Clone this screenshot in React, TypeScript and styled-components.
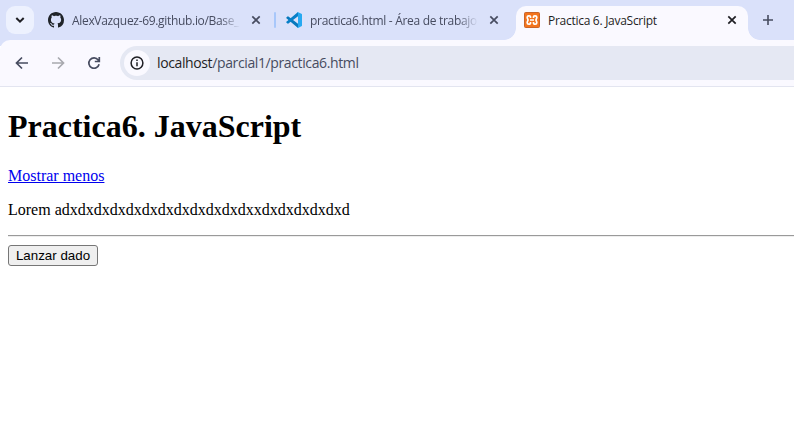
import React from "react";
import styled, { createGlobalStyle } from "styled-components";

const GlobalStyle = createGlobalStyle`
  * { box-sizing: border-box; }
  html, body { margin: 0; height: 100%; background: #fff; overflow: hidden; }
`;

const uiFont = `"Open Sans", "Noto Sans", sans-serif`;

const Browser = styled.div`
  width: 794px;
  height: 441px;
  display: flex;
  flex-direction: column;
  overflow: hidden;
  background: #fff;
`;

const TabStrip = styled.div`
  height: 46px;
  flex: none;
  padding: 6px 0 0 6px;
  margin-bottom: -6px;
  display: flex;
  align-items: flex-start;
  background: #dae1fa;
  font: 12px/28px ${uiFont};
`;

const TabSearch = styled.button`
  width: 28px;
  height: 28px;
  margin-right: 6px;
  padding: 0;
  border: 0;
  border-radius: 9px;
  background: #edf1fe;
  display: flex;
  align-items: center;
  justify-content: center;
`;

const Tab = styled.div<{ $active?: boolean }>`
  width: 232px;
  height: ${(p) => (p.$active ? 34 : 28)}px;
  flex: none;
  margin-left: ${(p) => (p.$active ? 6 : 0)}px;
  padding: 0 8px;
  display: flex;
  align-items: flex-start;
  position: relative;
  color: ${(p) => (p.$active ? "#1f1f24" : "#474c60")};
  background: ${(p) => (p.$active ? "#faf9ff" : "transparent")};
  border-radius: 10px 10px 0 0;

  &::before,
  &::after {
    content: "";
    display: ${(p) => (p.$active ? "block" : "none")};
    position: absolute;
    bottom: 0;
    width: 12px;
    height: 12px;
  }
  &::before {
    left: -12px;
    background: radial-gradient(circle at 0 0, transparent 11.5px, #faf9ff 12.2px);
  }
  &::after {
    right: -12px;
    background: radial-gradient(circle at 100% 0, transparent 11.5px, #faf9ff 12.2px);
  }
`;

const Favicon = styled.span`
  width: 16px;
  height: 28px;
  flex: none;
  margin-right: 8px;
  display: flex;
  align-items: center;
`;

const TabTitle = styled.span<{ $fade?: boolean; $spacing: number }>`
  flex: 1;
  min-width: 0;
  padding-top: 1px;
  overflow: hidden;
  white-space: nowrap;
  letter-spacing: ${(p) => p.$spacing}px;
  mask-image: ${(p) =>
    p.$fade ? "linear-gradient(90deg, #000 calc(100% - 20px), transparent)" : "none"};
`;

const CloseButton = styled.button<{ $active?: boolean }>`
  width: 16px;
  height: 28px;
  margin-left: 8px;
  padding: 0;
  border: 0;
  background: none;
  color: ${(p) => (p.$active ? "#1f1f24" : "#474c60")};
  display: flex;
  align-items: center;
  justify-content: center;
`;

const Separator = styled.span`
  width: 2px;
  height: 16px;
  margin: 6px 2px 0;
  border-radius: 1px;
  background: #a8c7fa;
`;

const NewTab = styled.button`
  width: 28px;
  height: 28px;
  margin-left: 6px;
  padding: 0;
  border: 0;
  background: none;
  color: #474c60;
  display: flex;
  align-items: center;
  justify-content: center;
`;

const Toolbar = styled.div`
  height: 47px;
  flex: none;
  padding: 6px 0 6px 14px;
  display: flex;
  align-items: center;
  position: relative;
  background: #faf9ff;
  border-bottom: 1px solid #e3e5f0;
  border-radius: 10px 0 0 0;
`;

const NavButton = styled.button<{ $disabled?: boolean }>`
  width: 16px;
  height: 16px;
  margin-right: 20px;
  padding: 0;
  border: 0;
  background: none;
  color: ${(p) => (p.$disabled ? "#a8a9af" : "#474c60")};
  display: flex;
`;

const AddressBar = styled.div`
  flex: 1;
  height: 34px;
  margin-left: -2px;
  padding-left: 4px;
  border-radius: 17px 0 0 17px;
  background: #e5e8f3;
  display: flex;
  align-items: center;
  color: #474c60;
  font: 14px/34px ${uiFont};
  letter-spacing: -0.38px;
`;

const SiteInfo = styled.span`
  width: 26px;
  height: 26px;
  margin-right: 7px;
  border-radius: 50%;
  background: #faf9ff;
  display: flex;
  align-items: center;
  justify-content: center;
`;

const Host = styled.span`
  color: #1f1f24;
`;

const Page = styled.main`
  flex: 1;
  width: 820px;
  padding: 0 8px;
  color: #000;
  font: 16px/18px "Liberation Serif", "Times New Roman", serif;
`;

const Heading = styled.h1`
  margin: 21.44px 0;
  font-size: 32px;
  line-height: 37px;
`;

const ToggleLink = styled.a`
  color: #0000ee;
  text-decoration: underline;
`;

const Paragraph = styled.p`
  margin: 16px 0;
`;

const Rule = styled.hr`
  height: 2px;
  margin: 0 0 8px;
  border: 0;
  border-top: 1px solid #9a9a9a;
  border-bottom: 1px solid #eeeeee;
`;

const RollButton = styled.button`
  display: block;
  width: 90px;
  height: 21px;
  padding: 0;
  border: 1px solid #767676;
  border-radius: 3px;
  background: #efefef;
  color: #000;
  font: 13.333px/19px "Liberation Sans", Arial, sans-serif;
`;

const CloseIcon = () => (
  <svg width="10" height="10" viewBox="0 0 10 10" stroke="currentColor" strokeWidth="1.7">
    <path d="M1.3 1.3 8.7 8.7M8.7 1.3 1.3 8.7" />
  </svg>
);

const GithubIcon = () => (
  <svg width="16" height="16" viewBox="0 0 16 16" fill="#202429">
    <path d="M8 0C3.58 0 0 3.58 0 8c0 3.54 2.29 6.53 5.47 7.59.4.07.55-.17.55-.38 0-.19-.01-.82-.01-1.49-2.01.37-2.53-.49-2.69-.94-.09-.23-.48-.94-.82-1.13-.28-.15-.68-.52-.01-.53.63-.01 1.08.58 1.23.82.72 1.21 1.87.87 2.33.66.07-.52.28-.87.51-1.07-1.78-.2-3.64-.89-3.64-3.95 0-.87.31-1.59.82-2.15-.08-.2-.36-1.02.08-2.12 0 0 .67-.21 2.2.82.64-.18 1.32-.27 2-.27s1.36.09 2 .27c1.53-1.04 2.2-.82 2.2-.82.44 1.1.16 1.92.08 2.12.51.56.82 1.27.82 2.15 0 3.07-1.87 3.75-3.65 3.95.29.25.54.73.54 1.48 0 1.07-.01 1.93-.01 2.2 0 .21.15.46.55.38A8.01 8.01 0 0 0 16 8c0-4.42-3.58-8-8-8z" />
  </svg>
);

const CodeIcon = () => (
  <svg width="16" height="16" viewBox="0 0 16 16">
    <path fill="#0879bd" d="M.4 5.4 1.5 4.4a.7.7 0 0 1 .9 0L12 11.8V16L.4 6.3a.6.6 0 0 1 0-.9z" />
    <path fill="#087fc8" d="M.4 10.6 1.5 11.6a.7.7 0 0 0 .9 0L12 4.2V0L.4 9.7a.6.6 0 0 0 0 .9z" />
    <path fill="#27a9f1" d="M11.5 15.9c-.3-.1-.5-.3-.5-.3.4.3 1 0 1-.6V1c0-.6-.6-.9-1-.6l.7-.4 3.7 1.7c.4.2.6.5.6.9v10.8c0 .4-.2.7-.6.9l-3.3 1.6z" />
  </svg>
);

const XamppIcon = () => (
  <svg width="16" height="16" viewBox="0 0 16 16">
    <rect x=".5" y=".5" width="15" height="15" rx="1" fill="#f3741d" stroke="#c9652a" />
    <path
      d="M6.5 6V4.800C6.500 3.500 3.200 3.300 3.200 5.200c0 1.400.8 1.700.8 2.800s-.8 1.400-.8 2.800c0 1.900 3.300 1.700 3.300.4V10M9.500 6V4.800c0-1.300 3.300-1.500 3.300.4 0 1.400-.8 1.700-.8 2.800s.8 1.400.8 2.800c0 1.900-3.300 1.700-3.300.4V10M6 8h4"
      fill="none"
      stroke="#fff"
      strokeWidth="1.700"
      strokeLinejoin="round"
    />
  </svg>
);

const ArrowIcon = ({ forward = false }: { forward?: boolean }) => (
  <svg width="16" height="16" viewBox="0 0 16 16" fill="none" stroke="currentColor" strokeWidth="1.7">
    <path d={forward ? "M2 8h11M8 2.500 13.500 8 8 13.500" : "M14 8H3M8 2.500 2.500 8 8 13.500"} />
  </svg>
);

const ReloadIcon = () => (
  <svg width="16" height="16" viewBox="0 0 16 16" fill="none" stroke="currentColor" strokeWidth="1.7">
    <path d="M13.100 9.300A5.200 5.200 0 1 1 12.200 4.900L13.200 6.100M13.300 2v4.500H8.800" />
  </svg>
);

export default function App() {
  return (
    <>
      <GlobalStyle />
      <Browser>
        <TabStrip>
          <TabSearch aria-label="Buscar pestañas">
            <svg width="10" height="8" viewBox="0 0 10 8" fill="none" stroke="#1f1f24" strokeWidth="2">
              <path d="m1.300 2 3.700 3.700L8.700 2" />
            </svg>
          </TabSearch>
          <Tab>
            <Favicon><GithubIcon /></Favicon>
            <TabTitle $fade $spacing={-0.32}>AlexVazquez-69.github.io/Base_</TabTitle>
            <CloseButton aria-label="Cerrar"><CloseIcon /></CloseButton>
          </Tab>
          <Separator />
          <Tab>
            <Favicon><CodeIcon /></Favicon>
            <TabTitle $fade $spacing={-0.3}>practica6.html - Área de trabajo</TabTitle>
            <CloseButton aria-label="Cerrar"><CloseIcon /></CloseButton>
          </Tab>
          <Tab $active>
            <Favicon><XamppIcon /></Favicon>
            <TabTitle $spacing={-0.28}>Practica 6. JavaScript</TabTitle>
            <CloseButton $active aria-label="Cerrar"><CloseIcon /></CloseButton>
          </Tab>
          <NewTab aria-label="Nueva pestaña">
            <svg width="12" height="12" viewBox="0 0 12 12" stroke="currentColor" strokeWidth="1.600">
              <path d="M6 1v10M1 6h10" />
            </svg>
          </NewTab>
        </TabStrip>
        <Toolbar>
          <NavButton aria-label="Atrás"><ArrowIcon /></NavButton>
          <NavButton $disabled aria-label="Adelante"><ArrowIcon forward /></NavButton>
          <NavButton aria-label="Recargar"><ReloadIcon /></NavButton>
          <AddressBar>
            <SiteInfo>
              <svg width="14" height="14" viewBox="0 0 14 14" fill="none" stroke="#1f1f24" strokeWidth="1.500">
                <circle cx="7" cy="7" r="5.900" />
                <path d="M7 6.200v4M7 3.500v1.500" />
              </svg>
            </SiteInfo>
            <span><Host>localhost</Host>/parcial1/practica6.html</span>
          </AddressBar>
        </Toolbar>
        <Page>
          <Heading>Practica6. JavaScript</Heading>
          <ToggleLink href="#">Mostrar menos</ToggleLink>
          <Paragraph>Lorem adxdxdxdxdxdxdxdxdxdxdxdxxdxdxdxdxdxd</Paragraph>
          <Rule />
          <RollButton>Lanzar dado</RollButton>
        </Page>
      </Browser>
    </>
  );
}
